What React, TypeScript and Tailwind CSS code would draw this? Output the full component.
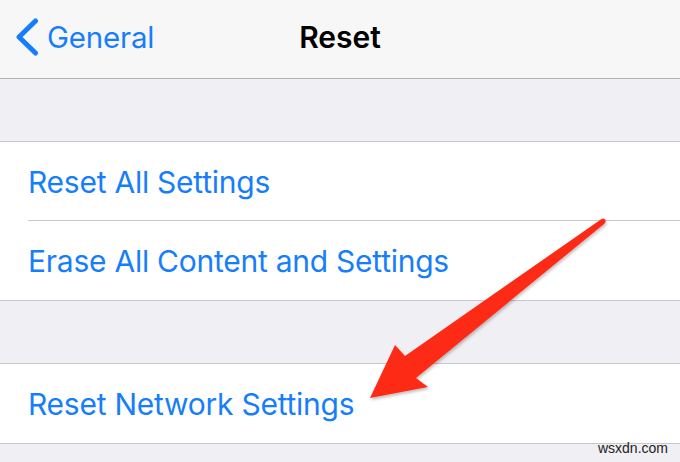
import React from "react";

const font = { fontFamily: "Inter, 'Noto Sans', sans-serif" };

interface RowProps {
  label: string;
  inset?: boolean;
}

const Row = ({ label, inset }: RowProps) => {
  return (
    <div className="bg-white pl-[28px]">
      <div
        className={
          inset
            ? "h-[79px] flex items-center border-b border-[#c8c7cc]"
            : "h-[79px] flex items-center"
        }
      >
        <span className="text-[30px] tracking-[-0.25px] text-[#167efb] pt-[2px]">{label}</span>
      </div>
    </div>
  );
};

const Arrow = () => {
  return (
    <svg
      className="absolute inset-0 pointer-events-none"
      width="680"
      height="462"
      viewBox="0 0 680 462"
    >
      <defs>
        <filter id="sh" x="-10%" y="-10%" width="130%" height="130%">
          <feDropShadow dx="1" dy="2" stdDeviation="1.5" floodColor="#000" floodOpacity="0.25" />
        </filter>
      </defs>
      <path
        d="M601.5 219 Q604 217.5 605.5 220 Q606 222.5 604 224 L416 378 L428 387 L370 398 L395 345 L405 356 Z"
        fill="#fd2a17"
        strokeLinejoin="round"
        filter="url(#sh)"
      />
    </svg>
  );
};

export default function App() {
  return (
    <div className="relative w-[680px] h-[462px] overflow-hidden bg-[#efeff4]" style={font}>
      <div className="h-[79px] bg-[#f7f7f7] border-b border-[#b2b2b2] flex items-center relative pb-[4px]">
        <div className="flex items-center pl-[15px] gap-[8px]">
          <svg width="24" height="38" viewBox="0 0 24 38">
            <path
              d="M20.5 3 L4 19 L20.5 35"
              fill="none"
              stroke="#167efb"
              strokeWidth="5"
              strokeLinecap="round"
              strokeLinejoin="round"
            />
          </svg>
          <span className="text-[29.5px] tracking-[-0.2px] text-[#167efb]">General</span>
        </div>
        <div className="absolute left-0 right-0 top-0 bottom-[4px] flex items-center justify-center pointer-events-none">
          <span className="text-[30px] font-semibold text-black">Reset</span>
        </div>
      </div>
      <div className="h-[63px] border-b border-[#c8c7cc]" />
      <Row label="Reset All Settings" inset />
      <div className="border-b border-[#c8c7cc]">
        <Row label="Erase All Content and Settings" />
      </div>
      <div className="h-[63px] border-b border-[#c8c7cc]" />
      <div className="border-b border-[#c8c7cc]">
        <Row label="Reset Network Settings" />
      </div>
      <Arrow />
      <div
        className="absolute right-[12px] bottom-[3px] text-[14px] text-[#222]"
        style={{ fontFamily: "'Liberation Sans', Arial, sans-serif" }}
      >
        wsxdn.com
      </div>
    </div>
  );
}
